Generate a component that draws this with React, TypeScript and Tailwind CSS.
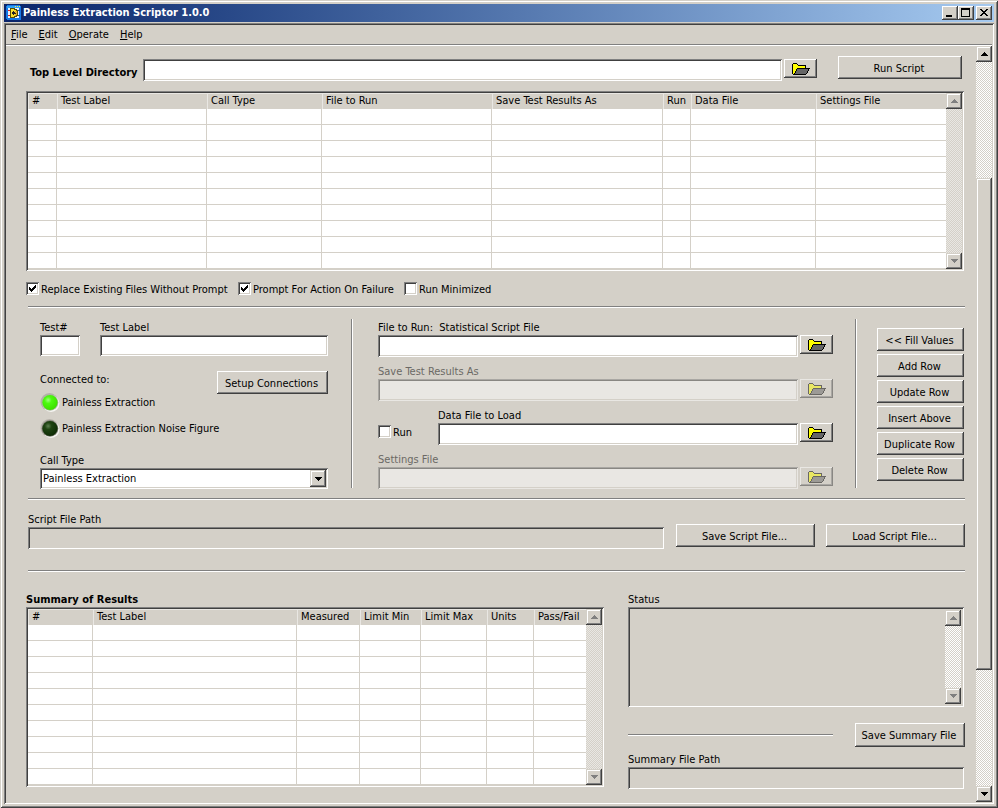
import React from 'react'

const raised = 'bg-[#d4d0c8] shadow-[inset_-1px_-1px_0_#404040,inset_1px_1px_0_#fff,inset_-2px_-2px_0_#808080]'
const raisedSoft = 'bg-[#d4d0c8] shadow-[inset_-1px_-1px_0_#404040,inset_1px_1px_0_#d4d0c8,inset_-2px_-2px_0_#808080,inset_2px_2px_0_#fff]'
const sunken = 'shadow-[inset_1px_1px_0_#808080,inset_-1px_-1px_0_#fff,inset_2px_2px_0_#404040,inset_-2px_-2px_0_#d4d0c8]'

interface Column {
  title: string
  width: string
}

const scriptColumns: Column[] = [
  { title: '#', width: 'w-[29px]' },
  { title: 'Test Label', width: 'w-[150px]' },
  { title: 'Call Type', width: 'w-[115px]' },
  { title: 'File to Run', width: 'w-[170px]' },
  { title: 'Save Test Results As', width: 'w-[171px]' },
  { title: 'Run', width: 'w-[28px]' },
  { title: 'Data File', width: 'w-[125px]' },
  { title: 'Settings File', width: 'w-auto' },
]

const resultColumns: Column[] = [
  { title: '#', width: 'w-[65px]' },
  { title: 'Test Label', width: 'w-auto' },
  { title: 'Measured', width: 'w-[63px]' },
  { title: 'Limit Min', width: 'w-[61px]' },
  { title: 'Limit Max', width: 'w-[66px]' },
  { title: 'Units', width: 'w-[47px]' },
  { title: 'Pass/Fail', width: 'w-[52px]' },
]

const menus = ['File', 'Edit', 'Operate', 'Help']
const rowActions = ['<< Fill Values', 'Add Row', 'Update Row', 'Insert Above', 'Duplicate Row', 'Delete Row']

function PushButton({ children, className }: { children: React.ReactNode; className: string }) {
  return (
    <button type="button" className={`${raised} shrink-0 whitespace-nowrap pt-[2px] pr-[2px] text-center leading-4 ${className}`}>
      {children}
    </button>
  )
}

function Separator({ className = '' }: { className?: string }) {
  return <div className={`h-[2px] border-t border-b border-t-[#808080] border-b-white ${className}`} />
}

function VerticalSeparator({ className = '' }: { className?: string }) {
  return <div className={`h-[169px] w-[2px] shrink-0 border-l border-r border-l-[#808080] border-r-white ${className}`} />
}

function BrowseButton({ label, disabled = false }: { label: string; disabled?: boolean }) {
  return (
    <button
      type="button"
      aria-label={label}
      disabled={disabled}
      className={`${raised} flex h-[19px] w-[33px] shrink-0 items-center justify-center pt-px disabled:opacity-50`}
    >
      <svg width="18" height="12" viewBox="0 0 18 12" shapeRendering="crispEdges">
        <path d="M1 0H5V1H6V2H14V5H18V6H17V8H16V10H15V11H14V12H1V11H0V1H1Z" fill="#000" />
        <path d="M1 1H5V2H6V3H13V5H5V6H4V8H3V10H2V11H1Z" fill="#ff0" />
        <path d="M5 6H16V8H15V10H14V11H3V10H4V8H5Z" fill="#666" />
      </svg>
    </button>
  )
}

function ScrollBar({ muted = false }: { muted?: boolean }) {
  const track = muted
    ? 'bg-[repeating-conic-gradient(#e9e7e3_0_25%,#d4d0c8_0_50%)]'
    : 'bg-[repeating-conic-gradient(#fff_0_25%,#d4d0c8_0_50%)]'
  return (
    <div className={`flex w-4 shrink-0 flex-col justify-between bg-[length:2px_2px] ${track}`}>
      <ScrollArrow up disabled />
      <ScrollArrow disabled />
    </div>
  )
}

function ScrollArrow({ up = false, disabled = false }: { up?: boolean; disabled?: boolean }) {
  return (
    <button
      type="button"
      disabled={disabled}
      aria-label={up ? 'Scroll up' : 'Scroll down'}
      className={`${raisedSoft} flex h-4 w-4 shrink-0 items-center justify-center pl-px text-black disabled:text-[#808080]`}
    >
      <svg width="7" height="4" viewBox="0 0 7 4" shapeRendering="crispEdges" fill="currentColor">
        <path d={up ? 'M3 0H4V1H5V2H6V3H7V4H0V3H1V2H2V1H3Z' : 'M0 0H7V1H6V2H5V3H4V4H3V3H2V2H1V1H0Z'} />
      </svg>
    </button>
  )
}

function DataTable({ columns, label }: { columns: Column[]; label: string }) {
  return (
    <div className={`${sunken} flex bg-[#d4d0c8] p-[2px]`}>
      <table aria-label={label} className="w-full table-fixed border-separate border-spacing-0 bg-white">
        <thead>
          <tr className="h-4 bg-[#d4d0c8]">
            {columns.map((column) => (
              <th
                key={column.title}
                className={`${column.width} h-4 whitespace-nowrap border-t border-l border-[#e9e7e3] p-0 pb-[2px] pl-[3px] text-left leading-[13px] font-normal`}
              >
                {column.title}
              </th>
            ))}
          </tr>
        </thead>
        <tbody>
          {Array.from({ length: 10 }, (_, row) => (
            <tr key={row}>
              {columns.map((column) => (
                <td key={column.title} className="h-4 border-r border-b border-[#d4d0c8] p-0 last:border-r-0" />
              ))}
            </tr>
          ))}
        </tbody>
      </table>
      <ScrollBar muted />
    </div>
  )
}

function CheckBox({ label, checked = false, className = '' }: { label: string; checked?: boolean; className?: string }) {
  return (
    <label className={`grid h-[13px] shrink-0 grid-cols-[13px_auto] justify-start gap-x-[2px] whitespace-nowrap leading-[15px] ${className}`}>
      <input
        type="checkbox"
        defaultChecked={checked}
        className={`${sunken} peer col-start-1 row-start-1 h-[13px] w-[13px] appearance-none bg-white`}
      />
      <svg
        width="13"
        height="13"
        viewBox="0 0 13 13"
        shapeRendering="crispEdges"
        className="pointer-events-none col-start-1 row-start-1 hidden peer-checked:block"
      >
        <path d="M3 5H4V6H5V7H6V6H7V5H8V4H9V3H10V6H9V7H8V8H7V9H6V10H5V9H4V8H3Z" />
      </svg>
      <span>{label}</span>
    </label>
  )
}

function TextField({
  id,
  label,
  disabled = false,
  readOnly = false,
  height = 'h-[22px]',
  className = '',
}: {
  id: string
  label: React.ReactNode
  disabled?: boolean
  readOnly?: boolean
  height?: string
  className?: string
}) {
  const tone = disabled ? 'bg-white opacity-50' : readOnly ? 'bg-[#d4d0c8]' : 'bg-white'
  return (
    <div className={`flex flex-col ${className}`}>
      <label htmlFor={id} className={`h-4 leading-[18px] whitespace-pre ${disabled ? 'text-[#6b6965]' : ''}`}>
        {label}
      </label>
      <input
        id={id}
        type="text"
        disabled={disabled}
        readOnly={readOnly}
        className={`${sunken} ${height} w-full px-1 outline-none ${tone}`}
      />
    </div>
  )
}

function Led({ on = false, label }: { on?: boolean; label: string }) {
  const id = on ? 'led-on' : 'led-off'
  return (
    <div className="flex h-[18px] items-center gap-[2px]">
      <svg width="20" height="20" viewBox="0 0 20 20">
        <defs>
          <radialGradient id={id} cx="0.38" cy="0.34" r="0.65">
            <stop offset="0" stopColor={on ? '#a0ff80' : '#5c7f50'} />
            <stop offset="0.35" stopColor={on ? '#4dfa10' : '#1f4413'} />
            <stop offset="1" stopColor={on ? '#3ee000' : '#0f2d06'} />
          </radialGradient>
        </defs>
        <circle cx="9.500" cy="9" r="9" fill="#b5b1a9" />
        <circle cx="11" cy="10.500" r="8.500" fill="#f6f5f2" />
        <circle cx="10" cy="9.500" r="8.300" fill={on ? '#a9b79f' : '#77786c'} />
        <circle cx="10" cy="9.500" r="7.600" fill={`url(#${id})`} />
      </svg>
      <span>{label}</span>
    </div>
  )
}

function TitleBar() {
  return (
    <header className="flex h-[18px] items-center bg-linear-to-r from-[#0a246a] to-[#a6caf0] pr-[2px] pl-[2px] text-white">
      <svg width="16" height="16" viewBox="0 0 16 16" shapeRendering="crispEdges">
        <path d="M1 0H14V1H15V15H1V14H0V1H1Z" fill="#1478e6" />
        <path d="M1 1H14V3H1Z" fill="#2ea0f4" />
        <path d="M9 1H10V2H9ZM11 1H12V2H11ZM13 1H14V2H13Z" fill="#ffe94a" />
        <path d="M2 3H13V13H2Z" fill="#e8f0fa" />
        <path d="M2 5H4V6H2ZM2 10H4V11H2Z" fill="#e02020" />
        <path d="M12 5H14V6H12ZM12 10H14V11H12Z" fill="#0a50b4" />
        <path d="M4 3H9V4H11V5H12V11H11V12H9V13H4Z" fill="#5a5000" />
        <path d="M5 4H8V5H10V6H11V10H10V11H8V12H5Z" fill="#f8e030" />
        <path d="M9 6H11V10H10V11H9Z" fill="#e8b020" />
        <path d="M7 6H8V7H9V8H10V9H8V10H7V9H6V7H7Z" fill="#222" />
      </svg>
      <h1 className="ml-[1px] flex-1 leading-[18px] font-bold">Painless Extraction Scriptor 1.0.0</h1>
      <div className="flex text-black">
        <button type="button" aria-label="Minimize" className={`${raised} h-[14px] w-4`}>
          <svg width="16" height="14" shapeRendering="crispEdges">
            <path d="M4 9H10V11H4Z" />
          </svg>
        </button>
        <button type="button" aria-label="Maximize" className={`${raised} h-[14px] w-4`}>
          <svg width="16" height="14" shapeRendering="crispEdges">
            <path d="M3 2H12V11H3ZM4 4V10H11V4Z" fillRule="evenodd" />
          </svg>
        </button>
        <button type="button" aria-label="Close" className={`${raised} ml-[2px] h-[14px] w-4`}>
          <svg width="16" height="14" shapeRendering="crispEdges">
            <path d="M4 3H6V4H7V5H9V4H10V3H12V4H11V5H10V6H9V7H10V8H11V9H12V10H10V9H9V8H7V9H6V10H4V9H5V8H6V7H7V6H6V5H5V4H4Z" />
          </svg>
        </button>
      </div>
    </header>
  )
}

function MenuBar() {
  return (
    <nav className="flex h-[21px] gap-[11px] border-b border-white pt-px pl-[5px] leading-[18px] shadow-[inset_0_-1px_0_#808080]">
      {menus.map((menu) => (
        <button key={menu} type="button" className="h-[18px]">
          <u className="decoration-1 underline-offset-1">{menu[0]}</u>
          {menu.slice(1)}
        </button>
      ))}
    </nav>
  )
}

function TestForm() {
  return (
    <section className="mt-[11px] flex items-start">
      <div className="ml-[14px] w-[288px] shrink-0">
        <div className="flex gap-5">
          <TextField id="test-number" label="Test#" height="h-[21px]" className="w-10" />
          <TextField id="test-label" label="Test Label" height="h-[21px]" className="flex-1" />
        </div>
        <div className="mt-[15px] flex items-start justify-between">
          <p className="leading-[18px]">Connected to:</p>
          <PushButton className="h-[23px] w-[111px]">Setup Connections</PushButton>
        </div>
        <Led on label="Painless Extraction" />
        <div className="mt-2">
          <Led label="Painless Extraction Noise Figure" />
        </div>
        <label htmlFor="call-type" className="mt-[14px] block h-4 leading-[18px]">
          Call Type
        </label>
        <div className={`${sunken} relative h-[21px] bg-white`}>
          <select id="call-type" className="h-full w-full appearance-none bg-transparent pt-px pl-[3px] outline-none">
            <option>Painless Extraction</option>
          </select>
          <span className={`${raisedSoft} pointer-events-none absolute top-[2px] right-[2px] flex h-[17px] w-4 items-center justify-center pl-px`}>
            <svg width="7" height="4" shapeRendering="crispEdges">
              <path d="M0 0H7V1H6V2H5V3H4V4H3V3H2V2H1V1H0Z" />
            </svg>
          </span>
        </div>
      </div>

      <VerticalSeparator className="ml-[23px]" />

      <div className="ml-[25px] flex min-w-0 flex-1 flex-col gap-[6px]">
        <div className="flex items-start gap-[2px]">
          <TextField id="file-to-run" label="File to Run:  Statistical Script File" className="flex-1" />
          <div className="pt-4">
            <BrowseButton label="Browse for file to run" />
          </div>
        </div>
        <div className="flex items-start gap-[2px]">
          <TextField id="save-results" label="Save Test Results As" disabled className="flex-1" />
          <div className="pt-4">
            <BrowseButton label="Browse for results file" disabled />
          </div>
        </div>
        <div className="flex items-start gap-[2px]">
          <CheckBox label="Run" className="mt-[18px] w-[58px]" />
          <TextField id="data-file" label="Data File to Load" className="flex-1" />
          <div className="pt-4">
            <BrowseButton label="Browse for data file" />
          </div>
        </div>
        <div className="flex items-start gap-[2px]">
          <TextField id="settings-file" label="Settings File" disabled className="flex-1" />
          <div className="pt-4">
            <BrowseButton label="Browse for settings file" disabled />
          </div>
        </div>
      </div>

      <VerticalSeparator className="ml-[22px]" />

      <div className="mt-[9px] mr-px ml-5 flex flex-col gap-[3px]">
        {rowActions.map((action) => (
          <PushButton key={action} className="h-[23px] w-[87px]">
            {action}
          </PushButton>
        ))}
      </div>
    </section>
  )
}

function Results() {
  return (
    <section className="mt-[19px] flex items-start gap-6">
      <div className="min-w-0 flex-1">
        <h2 className="h-4 leading-[18px] font-bold">Summary of Results</h2>
        <DataTable columns={resultColumns} label="Summary of Results" />
      </div>
      <div className="w-[337px] shrink-0">
        <label htmlFor="status" className="block h-4 leading-[18px]">
          Status
        </label>
        <div className={`${sunken} mr-px flex h-[100px] p-[3px]`}>
          <textarea id="status" readOnly className="min-w-0 flex-1 resize-none bg-transparent outline-none" />
          <ScrollBar />
        </div>
        <div className="mt-4 flex items-center justify-between">
          <Separator className="w-[205px]" />
          <PushButton className="h-6 w-[110px]">Save Summary File</PushButton>
        </div>
        <TextField id="summary-path" label="Summary File Path" readOnly className="mt-1 mr-px" />
      </div>
    </section>
  )
}

export default function App() {
  return (
    <div className="flex min-h-screen flex-col bg-[#d4d0c8] p-1 font-['DejaVu_Sans_Condensed','DejaVu_Sans',sans-serif] text-[11px] text-black shadow-[inset_1px_1px_0_#d4d0c8,inset_-1px_-1px_0_#404040,inset_2px_2px_0_#fff,inset_-2px_-2px_0_#808080]">
      <TitleBar />
      <div className={`${sunken} mt-px flex flex-1 flex-col p-[2px]`}>
        <MenuBar />
        <div className="flex flex-1">
          <main className="min-w-0 flex-1 pt-[10px] pr-[11px] pb-3 pl-5">
            <div className="flex items-start">
              <div className="flex flex-1 items-start pt-[3px]">
                <label htmlFor="top-directory" className="w-[117px] shrink-0 pl-1 leading-[28px] font-bold whitespace-nowrap">
                  Top Level Directory
                </label>
                <input id="top-directory" type="text" className={`${sunken} mr-[2px] h-[22px] min-w-0 flex-1 bg-white px-1 outline-none`} />
                <BrowseButton label="Browse for top level directory" />
              </div>
              <PushButton className="mr-[3px] ml-[21px] h-[23px] w-[124px]">Run Script</PushButton>
            </div>

            <div className="mt-1 mr-px">
              <DataTable columns={scriptColumns} label="Script" />
            </div>

            <div className="mt-[11px] flex">
              <CheckBox label="Replace Existing Files Without Prompt" checked className="w-[212px]" />
              <CheckBox label="Prompt For Action On Failure" checked className="w-[166px]" />
              <CheckBox label="Run Minimized" />
            </div>

            <Separator className="mt-[11px] ml-[2px]" />
            <TestForm />
            <Separator className="mt-[9px] ml-[2px]" />

            <section className="mt-[11px] ml-[2px] flex items-start">
              <TextField id="script-path" label="Script File Path" readOnly className="flex-1" />
              <PushButton className="mt-[13px] ml-3 h-[23px] w-[139px]">Save Script File...</PushButton>
              <PushButton className="mt-[13px] ml-[11px] h-[23px] w-[139px]">Load Script File...</PushButton>
            </section>

            <Separator className="mt-[21px] ml-[2px]" />
            <Results />
          </main>

          <div className="flex w-4 shrink-0 flex-col bg-[repeating-conic-gradient(#fff_0_25%,#d4d0c8_0_50%)] bg-[length:2px_2px]">
            <ScrollArrow up />
            <div className="flex-[116]" />
            <div className={`${raisedSoft} flex-[492]`} />
            <div className="flex-[116]" />
            <ScrollArrow />
          </div>
        </div>
      </div>
    </div>
  )
}
